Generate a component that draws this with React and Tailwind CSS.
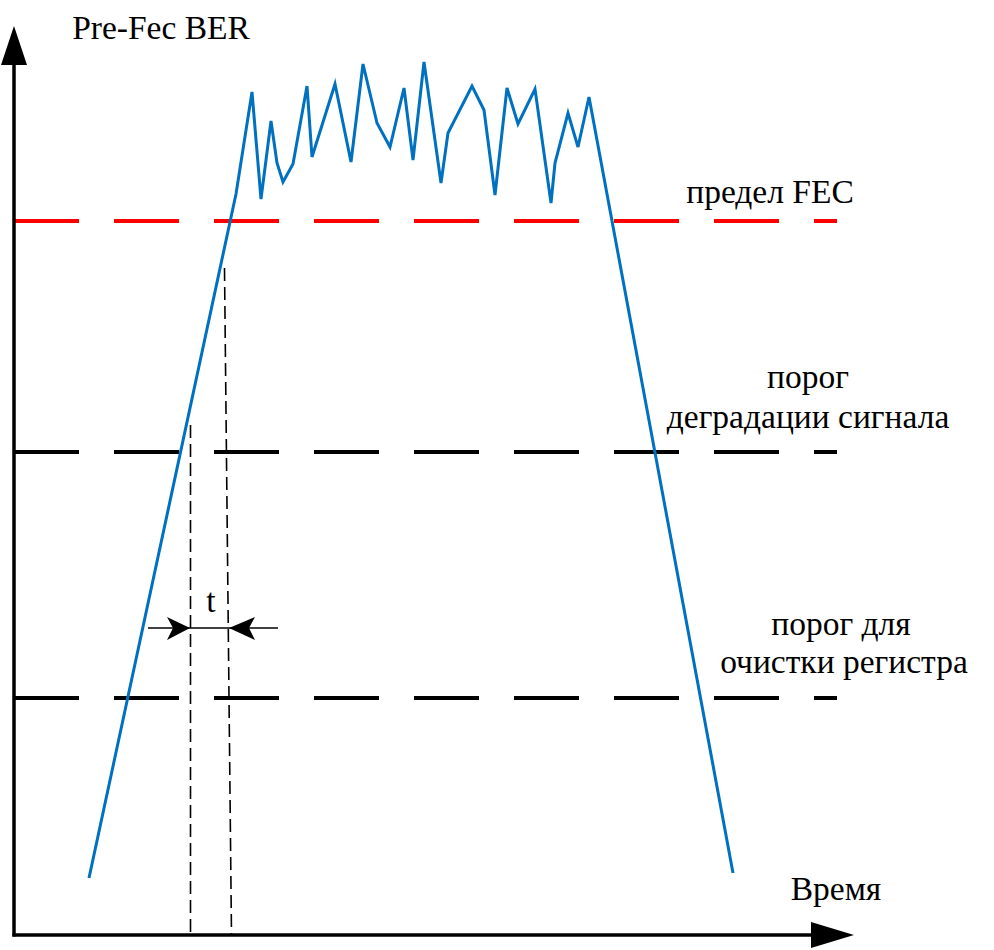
const CURVE = [
  [89, 878], [236, 194], [252, 92], [261, 199], [271, 121], [277, 163],
  [283, 182], [293, 164], [307, 86], [312, 157], [335, 84], [351, 162],
  [363, 64], [377, 123], [390, 147], [404, 88], [413, 160], [424, 62],
  [441, 183], [448, 133], [472, 86], [484, 110], [495, 195], [507, 88],
  [518, 124], [535, 89], [551, 203], [555, 163], [568, 113], [578, 147],
  [589, 97], [733, 873],
];

const LABELS = [
  { x: 161, y: 39, text: "Pre-Fec BER" },
  { x: 770, y: 203, text: "предел FEC" },
  { x: 808, y: 388, text: "порог" },
  { x: 808, y: 428, text: "деградации сигнала" },
  { x: 841, y: 635, text: "порог для" },
  { x: 844, y: 673, text: "очистки регистра" },
  { x: 211, y: 612, text: "t" },
  { x: 836, y: 900, text: "Время" },
];

function Chart() {
  return (
    <svg
      width="994"
      height="950"
      viewBox="0 0 994 950"
      className="block font-['Liberation_Serif',serif]"
      fontFamily="Liberation Serif, serif"
    >
      {/* thresholds */}
      <line x1="14" y1="221" x2="837" y2="221" stroke="#ff0000" strokeWidth="4" strokeDasharray="65 35" />
      <line x1="14" y1="452" x2="837" y2="452" stroke="#000" strokeWidth="4" strokeDasharray="65 35" />
      <line x1="14" y1="698" x2="837" y2="698" stroke="#000" strokeWidth="4" strokeDasharray="65 35" />

      {/* time markers */}
      <line x1="190.5" y1="425" x2="190.5" y2="935" stroke="#000" strokeWidth="1.6" strokeDasharray="13 6" />
      <line x1="224.5" y1="268" x2="231.5" y2="935" stroke="#000" strokeWidth="1.6" strokeDasharray="13 6" />

      {/* t interval arrows */}
      <line x1="148" y1="628" x2="278" y2="628" stroke="#000" strokeWidth="1.6" />
      <polygon points="190,628 167,617 173,628 167,640" fill="#000" />
      <polygon points="229,628 255,617 249,628 255,640" fill="#000" />

      {/* BER curve */}
      <polyline
        points={CURVE.map((p) => p.join(",")).join(" ")}
        fill="none"
        stroke="#0070c0"
        strokeWidth="3"
      />

      {/* axes */}
      <line x1="14" y1="60" x2="14" y2="936.5" stroke="#000" strokeWidth="3.5" />
      <polygon points="14,26 1,65 27,65" fill="#000" />
      <line x1="12.5" y1="935" x2="815" y2="935" stroke="#000" strokeWidth="3.5" />
      <polygon points="854,935 811,922 811,948" fill="#000" />

      {LABELS.map((l) => (
        <text key={l.text} x={l.x} y={l.y} textAnchor="middle" fontSize="33.5" fill="#000">
          {l.text}
        </text>
      ))}
    </svg>
  );
}

export default function App() {
  return (
    <div className="w-[994px] h-[950px] bg-white overflow-hidden font-['Liberation_Serif',serif]">
      <Chart />
    </div>
  );
}
